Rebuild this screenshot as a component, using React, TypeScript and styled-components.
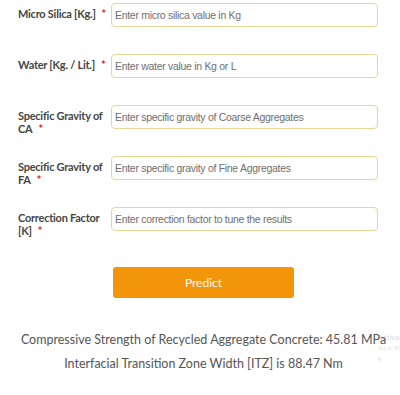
import React from "react";
import styled, { createGlobalStyle } from "styled-components";

const GlobalStyle = createGlobalStyle`
  html, body {
    margin: 0;
    padding: 0;
    background: #ffffff;
  }
  body {
    font-family: "Lato", "Open Sans", sans-serif;
  }
`;

const Page = styled.div`
  width: 400px;
  height: 395px;
  overflow: hidden;
  position: relative;
  background: #fff;
`;

const Form = styled.form`
  display: grid;
  grid-template-columns: 93px 1fr;
  grid-auto-rows: 24px;
  row-gap: 27px;
  padding: 3px 22px 0 18px;
`;

const Label = styled.label`
  align-self: start;
  padding-top: 4px;
  font-family: "Lato", sans-serif;
  font-weight: 700;
  font-size: 11px;
  line-height: 13px;
  letter-spacing: -0.25px;
  color: #454545;
  white-space: nowrap;
`;

const Star = styled.span`
  color: #e31b1b;
  margin-left: 6px;
`;

const Input = styled.input`
  box-sizing: border-box;
  width: 100%;
  height: 24px;
  border: 1px solid #ead496;
  border-radius: 4px;
  padding: 0 3px;
  font-family: "Liberation Sans", sans-serif;
  font-size: 10.5px;
  letter-spacing: -0.3px;
  color: #333;
  background: #fff;
  outline: none;
  &::placeholder {
    color: #6f6f6f;
  }
`;

const Actions = styled.div`
  display: flex;
  justify-content: center;
  padding: 36px 0 0 7px;
`;

const PredictButton = styled.button`
  width: 181px;
  height: 31px;
  border: none;
  border-radius: 3px;
  background: #f39508;
  color: #fff;
  font-family: "Lato", sans-serif;
  font-size: 12px;
  cursor: pointer;
`;

const Results = styled.div`
  display: flex;
  flex-direction: column;
  align-items: center;
  padding: 32px 0 0 7px;
  gap: 4px;
`;

const ResultLine = styled.p`
  margin: 0;
  font-family: "Lato", sans-serif;
  font-size: 12.5px;
  line-height: 20px;
  color: #555;
  white-space: nowrap;
`;

const Watermark = styled.div`
  position: absolute;
  left: 378px;
  top: 332px;
  font-family: "Liberation Sans", sans-serif;
  color: rgba(120, 120, 120, 0.3);
  line-height: 11px;
`;

const WatermarkTitle = styled.div`
  font-size: 8px;
`;

const WatermarkSub = styled.div`
  font-size: 6px;
`;

const fields = [
  { id: "ms", label: ["Micro Silica [Kg.]"], placeholder: "Enter micro silica value in Kg" },
  { id: "water", label: ["Water [Kg. / Lit.]"], placeholder: "Enter water value in Kg or L" },
  { id: "sgca", label: ["Specific Gravity of", "CA"], placeholder: "Enter specific gravity of Coarse Aggregates" },
  { id: "sgfa", label: ["Specific Gravity of", "FA"], placeholder: "Enter specific gravity of Fine Aggregates" },
  { id: "k", label: ["Correction Factor", "[K]"], placeholder: "Enter correction factor to tune the results" },
];

const App = () => {
  return (
    <Page>
      <GlobalStyle />
      <Form onSubmit={(e) => e.preventDefault()}>
        {fields.map((f) => (
          <React.Fragment key={f.id}>
            <Label htmlFor={f.id}>
              {f.label.map((line, i) => (
                <React.Fragment key={i}>
                  {i > 0 && <br />}
                  {line}
                </React.Fragment>
              ))}
              <Star>*</Star>
            </Label>
            <Input id={f.id} placeholder={f.placeholder} />
          </React.Fragment>
        ))}
      </Form>
      <Actions>
        <PredictButton type="button">Predict</PredictButton>
      </Actions>
      <Results>
        <ResultLine>Compressive Strength of Recycled Aggregate Concrete: 45.81 MPa</ResultLine>
        <ResultLine>Interfacial Transition Zone Width [ITZ] is 88.47 Nm</ResultLine>
      </Results>
      <Watermark>
        <WatermarkTitle>Activate</WatermarkTitle>
        <WatermarkSub>Go to PC s</WatermarkSub>
      </Watermark>
    </Page>
  );
};

export default App;
